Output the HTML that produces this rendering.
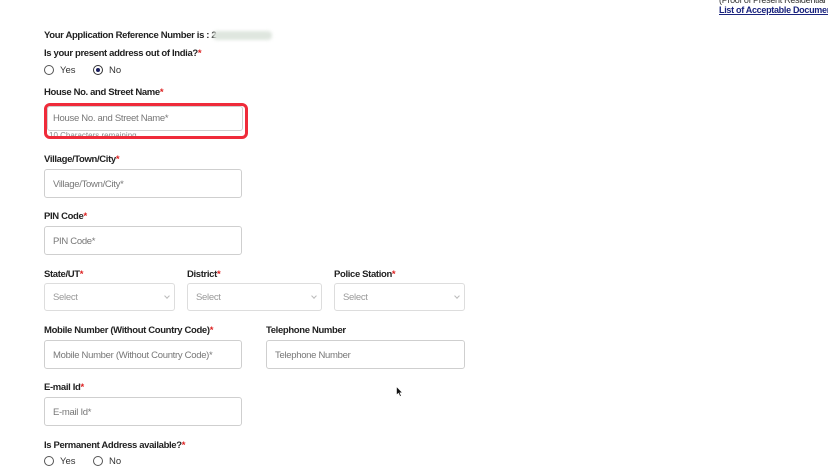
<!DOCTYPE html><html><head><style>
body{margin:0;width:828px;height:467px;background:#fff;position:relative;overflow:hidden;font-family:"Liberation Sans",Arial,sans-serif;color:#222}
.a{position:absolute;white-space:nowrap}
.l{position:absolute;font-size:9.5px;font-weight:bold;color:#222;white-space:nowrap;letter-spacing:-0.35px}
.l b{color:#d22;font-weight:bold}
.i{position:absolute;border:1px solid #cfcfcf;border-radius:3px;height:27px;box-sizing:border-box;font-size:9.5px;color:#777;padding-left:8px;line-height:27px;background:#fff;letter-spacing:-0.3px;white-space:nowrap}
.s{position:absolute;border:1px solid #ddd;border-radius:3px;height:28px;box-sizing:border-box;font-size:9.5px;color:#999;padding-left:8px;line-height:27px;letter-spacing:-0.3px}
.s:after{content:"";position:absolute;right:5px;top:10px;width:3px;height:3px;border-right:1px solid #bbb;border-bottom:1px solid #bbb;transform:rotate(45deg)}
.r{position:absolute;width:10px;height:10px;border:1px solid #555;border-radius:50%;box-sizing:border-box}
.t{position:absolute;font-size:9.5px;color:#333}
</style></head><body>
<div class="a" style="left:719px;top:-5px;font-size:9px;color:#333;letter-spacing:-0.3px">(Proof of Present Residential</div>
<div class="a" style="left:719px;top:5px;font-size:9px;font-weight:bold;color:#1a237e;text-decoration:underline;letter-spacing:-0.3px">List of Acceptable Documents</div>
<div class="l" style="left:44px;top:30px">Your Application Reference Number is : 2</div>
<div class="a" style="left:213px;top:31px;width:59px;height:9px;background:#dfe6df;border-radius:4px;filter:blur(1.5px)"></div>
<div class="l" style="left:44px;top:48px">Is your present address out of India?<b>*</b></div>
<div class="r" style="left:44px;top:65px"></div><div class="t" style="left:60px;top:65px">Yes</div>
<div class="r" style="left:93px;top:65px;border-color:#333"><div style="position:absolute;left:2px;top:2px;width:4px;height:4px;border-radius:50%;background:#1a1f5e"></div></div><div class="t" style="left:109px;top:65px">No</div>
<div class="l" style="left:44px;top:87px">House No. and Street Name<b>*</b></div>
<div class="a" style="left:44px;top:103px;width:204px;height:36px;box-sizing:border-box;border:3px solid #ef2b3a;border-radius:6px"></div>
<div class="i" style="left:47px;top:106px;width:196px;height:25px;line-height:23px;padding-left:5px">House No. and Street Name*</div>
<div class="a" style="left:49px;top:131px;font-size:8px;color:#888;height:5px;overflow:hidden">10 Characters remaining</div>
<div class="l" style="left:44px;top:154px">Village/Town/City<b>*</b></div>
<div class="i" style="left:44px;top:169px;width:198px;height:29px;line-height:29px">Village/Town/City*</div>
<div class="l" style="left:44px;top:211px">PIN Code<b>*</b></div>
<div class="i" style="left:44px;top:226px;width:198px;height:29px;line-height:29px">PIN Code*</div>
<div class="l" style="left:44px;top:269px">State/UT<b>*</b></div>
<div class="l" style="left:187px;top:269px">District<b>*</b></div>
<div class="l" style="left:334px;top:269px">Police Station<b>*</b></div>
<div class="s" style="left:44px;top:283px;width:131px">Select</div>
<div class="s" style="left:187px;top:283px;width:135px">Select</div>
<div class="s" style="left:334px;top:283px;width:131px">Select</div>
<div class="l" style="left:44px;top:325px">Mobile Number (Without Country Code)<b>*</b></div>
<div class="l" style="left:266px;top:325px">Telephone Number</div>
<div class="i" style="left:44px;top:340px;width:198px;height:29px;line-height:29px">Mobile Number (Without Country Code)*</div>
<div class="i" style="left:266px;top:340px;width:199px;height:29px;line-height:29px">Telephone Number</div>
<div class="l" style="left:44px;top:382px">E-mail Id<b>*</b></div>
<div class="i" style="left:44px;top:397px;width:198px;height:29px;line-height:29px">E-mail Id*</div>
<div class="l" style="left:44px;top:440px">Is Permanent Address available?<b>*</b></div>
<div class="r" style="left:44px;top:456px"></div><div class="t" style="left:60px;top:456px">Yes</div>
<div class="r" style="left:93px;top:456px"></div><div class="t" style="left:109px;top:456px">No</div>
<svg class="a" style="left:396px;top:386px" width="8" height="12" viewBox="0 0 8 12"><path d="M0.5 0.5 L0.5 9 L2.5 7.2 L4 10.5 L5.3 10 L3.9 6.8 L6.5 6.8 Z" fill="#111" stroke="#fff" stroke-width="0.6"/></svg>
</body></html>
